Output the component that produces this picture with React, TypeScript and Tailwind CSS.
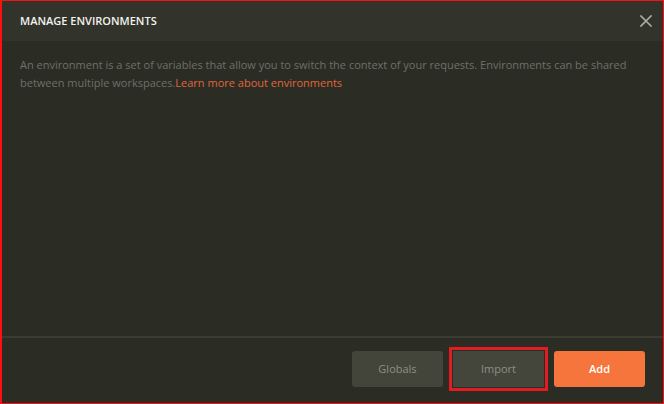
export default function App() {
  return (
    <div
      className="w-[664px] h-[404px] flex flex-col bg-[#2b2c24] border-t border-r border-b border-l-2 border-[#ff1010] overflow-hidden"
      style={{ fontFamily: '"Open Sans", "Liberation Sans", sans-serif' }}
    >
      {/* Header */}
      <div className="h-[40px] shrink-0 flex items-center justify-between bg-[#32342b] pl-[18px] pr-[11px]">
        <h1 className="text-[11px] font-semibold text-[#f2f2ee]">
          MANAGE ENVIRONMENTS
        </h1>
        <button className="text-[#a9aaa3]" aria-label="Close">
          <svg width="12" height="12" viewBox="0 0 12 12" fill="none" stroke="currentColor" strokeWidth="1.7" strokeLinecap="square">
            <path d="M1 1L11 11M11 1L1 11" />
          </svg>
        </button>
      </div>

      {/* Body */}
      <div className="flex-1 pl-[18px] pr-[20px] pt-[15px]">
        <p className="text-[11px] leading-[18px] text-[#6f7068]">
          An environment is a set of variables that allow you to switch the context of your requests. Environments can be shared
          <br />
          between multiple workspaces.
          <a className="text-[#e0663c]">Learn more about environments</a>
        </p>
      </div>

      {/* Footer */}
      <div className="shrink-0 h-[67px] border-t-2 border-[#3a3b33] flex items-start justify-end gap-[10px] pt-[13px] pr-[18px]">
        <button className="w-[91px] h-[36px] rounded-[3px] bg-[#43453b] text-[11px] text-[#8d8e86]">
          Globals
        </button>
        <button className="w-[91px] h-[36px] bg-[#44463c] text-[11px] text-[#8d8e86] outline-[3px] outline-solid outline-offset-[1px] outline-[#e31b23]">
          Import
        </button>
        <button className="w-[91px] h-[36px] rounded-[3px] bg-[#f5753d] text-[11px] font-semibold text-white">
          Add
        </button>
      </div>
    </div>
  );
}
